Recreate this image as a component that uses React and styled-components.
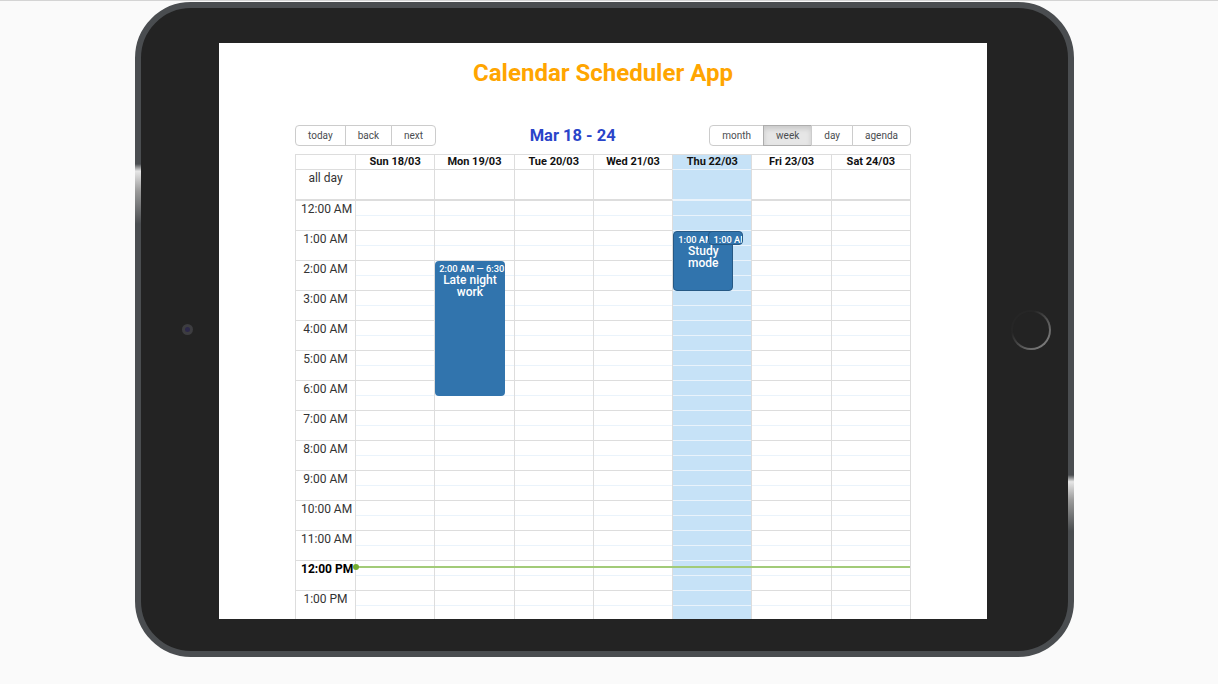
import React from 'react';
import styled, { createGlobalStyle } from 'styled-components';

const GlobalStyle = createGlobalStyle`
  html, body { margin: 0; padding: 0; }
  body {
    background: #fafafa;
    border-top: 1px solid #d4d4d4;
    font-family: Roboto, "Noto Sans", Arial, sans-serif;
    height: 683px;
    overflow: hidden;
  }
  * { box-sizing: border-box; }
`;

const Page = styled.div`
  padding: 1px 0 0 135px;
`;

const Tablet = styled.div`
  position: relative;
  width: 939px;
  height: 655px;
  border: 6px solid #4a4d50;
  border-radius: 56px;
  background: #232323;
  display: flex;
  align-items: center;
`;

const SideKey = styled.div`
  position: absolute;
  width: 6px;
  height: ${p => p.$h}px;
  top: ${p => p.$top}px;
  ${p => (p.$side === 'left' ? 'left: -6px;' : 'right: -6px;')}
  background: linear-gradient(to bottom, #4a4d50 0%, #e6e6e6 12%, #9a9a9a 45%, #4a4d50 100%);
`;

const Camera = styled.div`
  width: 11px;
  height: 11px;
  border-radius: 50%;
  background: #3d3d40;
  margin: 0 26px 0 41px;
  display: flex;
  align-items: center;
  justify-content: center;
  &::after {
    content: '';
    width: 5px;
    height: 5px;
    border-radius: 50%;
    background: #2c2849;
  }
`;

const HomeButton = styled.div`
  width: 40px;
  height: 40px;
  border-radius: 50%;
  padding: 2px;
  margin-left: 24px;
  background: linear-gradient(135deg, #262626 30%, #5e5e5e 65%, #8e8e8e 100%);
  &::after {
    content: '';
    display: block;
    width: 100%;
    height: 100%;
    border-radius: 50%;
    background: #232323;
  }
`;

const Screen = styled.div`
  align-self: flex-start;
  margin-top: 35px;
  width: 768px;
  height: 576px;
  background: #fff;
  overflow: hidden;
  display: flex;
  flex-direction: column;
  align-items: center;
`;

const Title = styled.h1`
  margin: 16px 0 38px;
  font-size: 24px;
  line-height: 28px;
  font-weight: 700;
  color: #ffa500;
`;

const Calendar = styled.div`
  width: 616px;
  flex-shrink: 0;
`;

const Toolbar = styled.div`
  display: flex;
  align-items: center;
  height: 21px;
  margin-bottom: 8px;
`;

const ButtonGroup = styled.div`
  display: flex;
`;

const ToolButton = styled.button`
  height: 21px;
  padding: 0 12px;
  margin: 0;
  border: 1px solid #ccc;
  background: ${p => (p.$active ? '#e6e6e6' : '#fff')};
  box-shadow: ${p => (p.$active ? 'inset 0 3px 5px rgba(0,0,0,.125)' : 'none')};
  border-color: ${p => (p.$active ? '#adadad' : '#ccc')};
  font-family: Roboto, sans-serif;
  font-size: 10px;
  color: #4a4d50;
  border-radius: 0;
  & + & { margin-left: -1px; }
  &:first-child { border-radius: 4px 0 0 4px; }
  &:last-child { border-radius: 0 4px 4px 0; }
`;

const Label = styled.div`
  flex: 1;
  text-align: center;
  font-size: 16.5px;
  font-weight: 700;
  color: #2a44c9;
`;

const TimeView = styled.div`
  border: 1px solid #ddd;
`;

const Row = styled.div`
  display: grid;
  grid-template-columns: 59px repeat(7, 1fr);
`;

const HeaderCell = styled.div`
  height: 15px;
  border-bottom: 1px solid ${p => (p.$today ? '#eaf3fb' : '#ddd')};
  border-left: ${p => (p.$gutter ? 'none' : '1px solid #ddd')};
  background: ${p => (p.$today ? '#c6e2f7' : 'transparent')};
  font-size: 11px;
  line-height: 14px;
  font-weight: 700;
  color: #111;
  text-align: center;
  white-space: nowrap;
  overflow: hidden;
`;

const AllDayCell = styled.div`
  height: 29px;
  padding-top: 2px;
  border-left: ${p => (p.$gutter ? 'none' : '1px solid #ddd')};
  background: ${p => (p.$today ? '#c6e2f7' : 'transparent')};
  font-size: 12px;
  line-height: 12px;
  color: #333;
  text-align: center;
`;

const Body = styled(Row)`
  position: relative;
`;

const Column = styled.div`
  position: relative;
  border-top: 2px solid ${p => (p.$today ? '#eaf3fb' : '#ddd')};
  border-left: ${p => (p.$gutter ? 'none' : '1px solid #ddd')};
  background: ${p => (p.$today ? '#c6e2f7' : 'transparent')};
`;

const SlotGroup = styled.div`
  height: 30px;
  border-bottom: 1px solid ${p => (p.$today ? '#eaf3fb' : '#ddd')};
  display: flex;
  flex-direction: column;
`;

const Slot = styled.div`
  flex: 1;
  & + & { border-top: 1px solid ${p => (p.$today ? '#eaf3fb' : '#f3f3f3')}; }
`;

const GutterLabel = styled.div`
  height: 30px;
  border-bottom: 1px solid #ddd;
  padding: 1px 5px 0;
  font-size: 12px;
  line-height: 14px;
  font-weight: ${p => (p.$current ? 700 : 400)};
  color: ${p => (p.$current ? '#000' : '#333')};
  text-align: center;
  white-space: nowrap;
`;

const EventLayer = styled.div`
  position: absolute;
  top: 0;
  bottom: 0;
  left: 0;
  right: 9px;
`;

const Event = styled.div`
  position: absolute;
  background: #3174ad;
  color: #fff;
  border-radius: 4px;
  padding: 3px 4px;
  overflow: hidden;
  border: ${p => (p.$bordered ? '1px solid #265985' : 'none')};
`;

const EventTime = styled.div`
  font-size: 9.3px;
  line-height: 10px;
  font-weight: 500;
  white-space: nowrap;
`;

const EventTitle = styled.div`
  font-size: 12px;
  line-height: 12px;
  font-weight: 500;
  text-align: center;
`;

const NowLine = styled.div`
  position: absolute;
  left: 59px;
  right: 0;
  height: 2px;
  background: #a2cb78;
  pointer-events: none;
  &::before {
    content: '';
    position: absolute;
    left: -2px;
    top: -2px;
    width: 6px;
    height: 6px;
    border-radius: 50%;
    background: #74ad31;
  }
`;

const days = [
  { label: 'Sun 18/03' },
  { label: 'Mon 19/03', events: [
    { top: 60, height: 135, left: 0, width: 100, time: '2:00 AM — 6:30 AM', title: 'Late night work' },
  ] },
  { label: 'Tue 20/03' },
  { label: 'Wed 21/03' },
  { label: 'Thu 22/03', today: true, events: [
    { top: 30, height: 60, left: 0, width: 87, time: '1:00 AM — 3:00 AM', title: 'Study mode', bordered: true },
    { top: 30, height: 14, left: 51, width: 50, time: '1:00 AM — 1:15 AM', title: '', bordered: true },
  ] },
  { label: 'Fri 23/03' },
  { label: 'Sat 24/03' },
];

const hours = Array.from({ length: 24 }, (_, i) => {
  const h = i % 12 === 0 ? 12 : i % 12;
  return `${h}:00 ${i < 12 ? 'AM' : 'PM'}`;
});

export default function App() {
  return (
    <Page>
      <GlobalStyle />
      <Tablet>
        <SideKey $side="left" $top={156} $h={60} />
        <SideKey $side="right" $top={467} $h={56} />
        <Camera />
        <Screen>
          <Title>Calendar Scheduler App</Title>
          <Calendar>
            <Toolbar>
              <ButtonGroup>
                <ToolButton>today</ToolButton>
                <ToolButton>back</ToolButton>
                <ToolButton>next</ToolButton>
              </ButtonGroup>
              <Label>Mar 18 - 24</Label>
              <ButtonGroup>
                <ToolButton>month</ToolButton>
                <ToolButton $active>week</ToolButton>
                <ToolButton>day</ToolButton>
                <ToolButton>agenda</ToolButton>
              </ButtonGroup>
            </Toolbar>
            <TimeView>
              <Row>
                <HeaderCell $gutter />
                {days.map(d => (
                  <HeaderCell key={d.label} $today={d.today}>{d.label}</HeaderCell>
                ))}
              </Row>
              <Row>
                <AllDayCell $gutter>all day</AllDayCell>
                {days.map(d => (
                  <AllDayCell key={d.label} $today={d.today} />
                ))}
              </Row>
              <Body>
                <Column $gutter>
                  {hours.map((h, i) => (
                    <GutterLabel key={h} $current={i === 12}>{h}</GutterLabel>
                  ))}
                </Column>
                {days.map(d => (
                  <Column key={d.label} $today={d.today}>
                    {hours.map(h => (
                      <SlotGroup key={h} $today={d.today}>
                        <Slot $today={d.today} />
                        <Slot $today={d.today} />
                      </SlotGroup>
                    ))}
                    {d.events && (
                      <EventLayer>
                        {d.events.map((e, i) => (
                          <Event
                            key={i}
                            $bordered={e.bordered}
                            style={{ top: e.top, height: e.height, left: `${e.left}%`, width: `${e.width}%` }}
                          >
                            <EventTime>{e.time}</EventTime>
                            {e.title && <EventTitle>{e.title}</EventTitle>}
                          </Event>
                        ))}
                      </EventLayer>
                    )}
                  </Column>
                ))}
                <NowLine style={{ top: 2 + 365 }} />
              </Body>
            </TimeView>
          </Calendar>
        </Screen>
        <HomeButton />
      </Tablet>
    </Page>
  );
}
